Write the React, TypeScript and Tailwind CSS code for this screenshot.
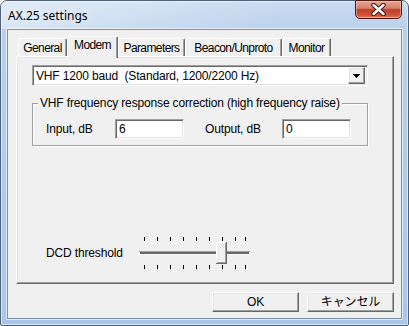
import React from "react";

// classic (non-themed) 3D edges
const raised =
  "border border-t-white border-l-white border-r-[#696969] border-b-[#696969] shadow-[inset_-1px_-1px_0_#a0a0a0,inset_1px_1px_0_#e3e3e3]";
const sunken =
  "border border-t-[#a0a0a0] border-l-[#a0a0a0] border-r-white border-b-white shadow-[inset_1px_1px_0_#696969,inset_-1px_-1px_0_#e3e3e3]";

const tabs = [
  { label: "General", width: "w-[49px]", active: false },
  { label: "Modem", width: "w-[51px]", active: true },
  { label: "Parameters", width: "w-[67px]", active: false },
  { label: "Beacon/Unproto", width: "w-[97px]", active: false },
  { label: "Monitor", width: "w-[49px]", active: false },
];

const ticks = [5, 18, 31, 44, 57, 70, 83, 96, 106];

function CloseButton() {
  return (
    <div className="-mt-[1px] w-[47px] h-[19px] rounded-b-[5px] border border-[#4e1a12] bg-[linear-gradient(180deg,#e6a595_0%,#d7806b_42%,#c23c24_52%,#d0583c_85%,#e07a5c_100%)] shadow-[inset_0_0_0_1px_rgba(255,220,210,0.45)] flex items-center justify-center">
      <svg width="15" height="13" viewBox="0 0 15 13">
        <path d="M2.5 2 L12.5 11 M12.5 2 L2.5 11" stroke="#3f140e" strokeWidth="4.4" strokeLinecap="round" />
        <path d="M2.5 2 L12.5 11 M12.5 2 L2.5 11" stroke="#ffffff" strokeWidth="2.4" strokeLinecap="round" />
      </svg>
    </div>
  );
}

function Tab({ label, width, active }: { label: string; width: string; active: boolean }) {
  if (active) {
    return (
      <div
        className={`${width} h-[22px] -mb-[2px] relative z-10 bg-[#f0f0f0] rounded-t-[2px] border-t border-l border-r border-t-white border-l-white border-r-[#696969] shadow-[inset_-1px_0_0_#a0a0a0] flex justify-center pt-[1px] leading-[14px] tracking-[-0.6px]`}
      >
        {label}
      </div>
    );
  }
  return (
    <div
      className={`${width} h-[18px] rounded-t-[2px] border-t border-l border-r border-t-white border-l-white border-r-[#696969] shadow-[inset_-1px_0_0_#a0a0a0] flex justify-center pt-[2px] leading-[14px] tracking-[-0.6px]`}
    >
      {label}
    </div>
  );
}

function TextField({ value }: { value: string }) {
  return (
    <div className={`w-[69px] h-[20px] bg-white flex items-center pl-[3px] leading-none ${sunken}`}>
      {value}
    </div>
  );
}

function Slider() {
  return (
    <svg width="112" height="32" viewBox="0 0 112 32" shapeRendering="crispEdges">
      {ticks.map((x) => (
        <g key={x}>
          <rect x={x} y={0} width={1} height={4} fill="#000" />
          <rect x={x} y={28} width={1} height={4} fill="#000" />
        </g>
      ))}
      {/* channel */}
      <rect x={0} y={14} width={111} height={1} fill="#a0a0a0" />
      <rect x={1} y={15} width={109} height={2} fill="#696969" />
      <rect x={0} y={17} width={111} height={1} fill="#ffffff" />
      {/* thumb */}
      <rect x={77} y={5} width={11} height={22} fill="#696969" />
      <rect x={77} y={5} width={10} height={21} fill="#ffffff" />
      <rect x={78} y={6} width={9} height={20} fill="#a0a0a0" />
      <rect x={78} y={6} width={8} height={19} fill="#f0f0f0" />
    </svg>
  );
}

export default function App() {
  return (
    <div className="w-[409px] h-[326px] bg-white font-['Liberation_Sans',Arial,sans-serif] text-[12px] tracking-[-0.15px] text-black select-none">
      <div className="w-full h-full flex flex-col rounded-t-[7px] rounded-b-[2px] border border-[#4f6176] bg-[linear-gradient(180deg,#cadcf1_0px,#b8d0ec_30px,#a9c6e9_100%)] shadow-[inset_0_0_0_1px_rgba(255,255,255,0.55)]">
        {/* title bar */}
        <div className="h-[28px] shrink-0 flex justify-between pl-[7px] pr-[6px] rounded-t-[6px] bg-[linear-gradient(90deg,rgba(255,255,255,0.45)_0%,rgba(255,255,255,0.2)_40%,rgba(255,255,255,0)_70%)]">
          <div className="self-center mt-[2px] font-['Noto_Sans',sans-serif] text-[12px] tracking-normal leading-none [text-shadow:0_0_8px_#ffffff]">
            AX.25 settings
          </div>
          <CloseButton />
        </div>

        {/* client area */}
        <div className="mx-[6px] mb-[6px] flex-1 border border-[#7e90a6] bg-[#f0f0f0] shadow-[0_0_0_1px_rgba(255,255,255,0.6)] flex flex-col pl-[8px] pt-[6px]">
          {/* tab strip */}
          <div className="h-[20px] flex items-end pl-[2px]">
            {tabs.map((t) => (
              <Tab key={t.label} {...t} />
            ))}
          </div>

          {/* tab page */}
          <div className="w-[378px] h-[228px] border border-t-white border-l-white border-r-[#696969] border-b-[#696969] shadow-[inset_-1px_-1px_0_#a0a0a0,inset_1px_1px_0_#e3e3e3] flex flex-col pl-[15px] pt-[8px]">
            {/* modem combobox */}
            <div className={`w-[336px] h-[21px] bg-white flex items-center justify-between pl-[3px] pr-[2px] ${sunken}`}>
              <span className="whitespace-pre leading-none">VHF 1200 baud  (Standard, 1200/2200 Hz)</span>
              <div className={`w-[17px] h-[17px] bg-[#f0f0f0] flex items-center justify-center ${raised}`}>
                <svg width="7" height="4" viewBox="0 0 7 4" shapeRendering="crispEdges">
                  <path d="M0 0 H7 L3.5 4 Z" fill="#000" />
                </svg>
              </div>
            </div>

            {/* group box */}
            <fieldset className="mt-[10px] w-[336px] border border-[#a0a0a0] shadow-[inset_1px_1px_0_#ffffff,1px_1px_0_#ffffff] pb-[6px]">
              <legend className="ml-[5px] px-[2px] leading-[14px] bg-[#f0f0f0]">
                VHF frequency response correction (high frequency raise)
              </legend>
              <div className="mt-[9px] flex items-center pl-[13px]">
                <span className="w-[69px]">Input, dB</span>
                <TextField value="6" />
                <span className="ml-[21px] w-[77px]">Output, dB</span>
                <TextField value="0" />
              </div>
            </fieldset>

            {/* DCD threshold */}
            <div className="mt-[91px] h-[32px] flex items-center pl-[14px]">
              <span className="w-[93px]">DCD threshold</span>
              <Slider />
            </div>
          </div>

          {/* buttons */}
          <div className="w-[378px] mt-[8px] flex justify-end gap-[8px]">
            <button className={`w-[87px] h-[20px] bg-[#f0f0f0] leading-none ${raised}`}>OK</button>
            <button className={`w-[87px] h-[20px] bg-[#f0f0f0] leading-none font-['Liberation_Sans','Noto_Sans_CJK_JP',sans-serif] ${raised}`}>
              キャンセル
            </button>
          </div>
        </div>
      </div>
    </div>
  );
}
